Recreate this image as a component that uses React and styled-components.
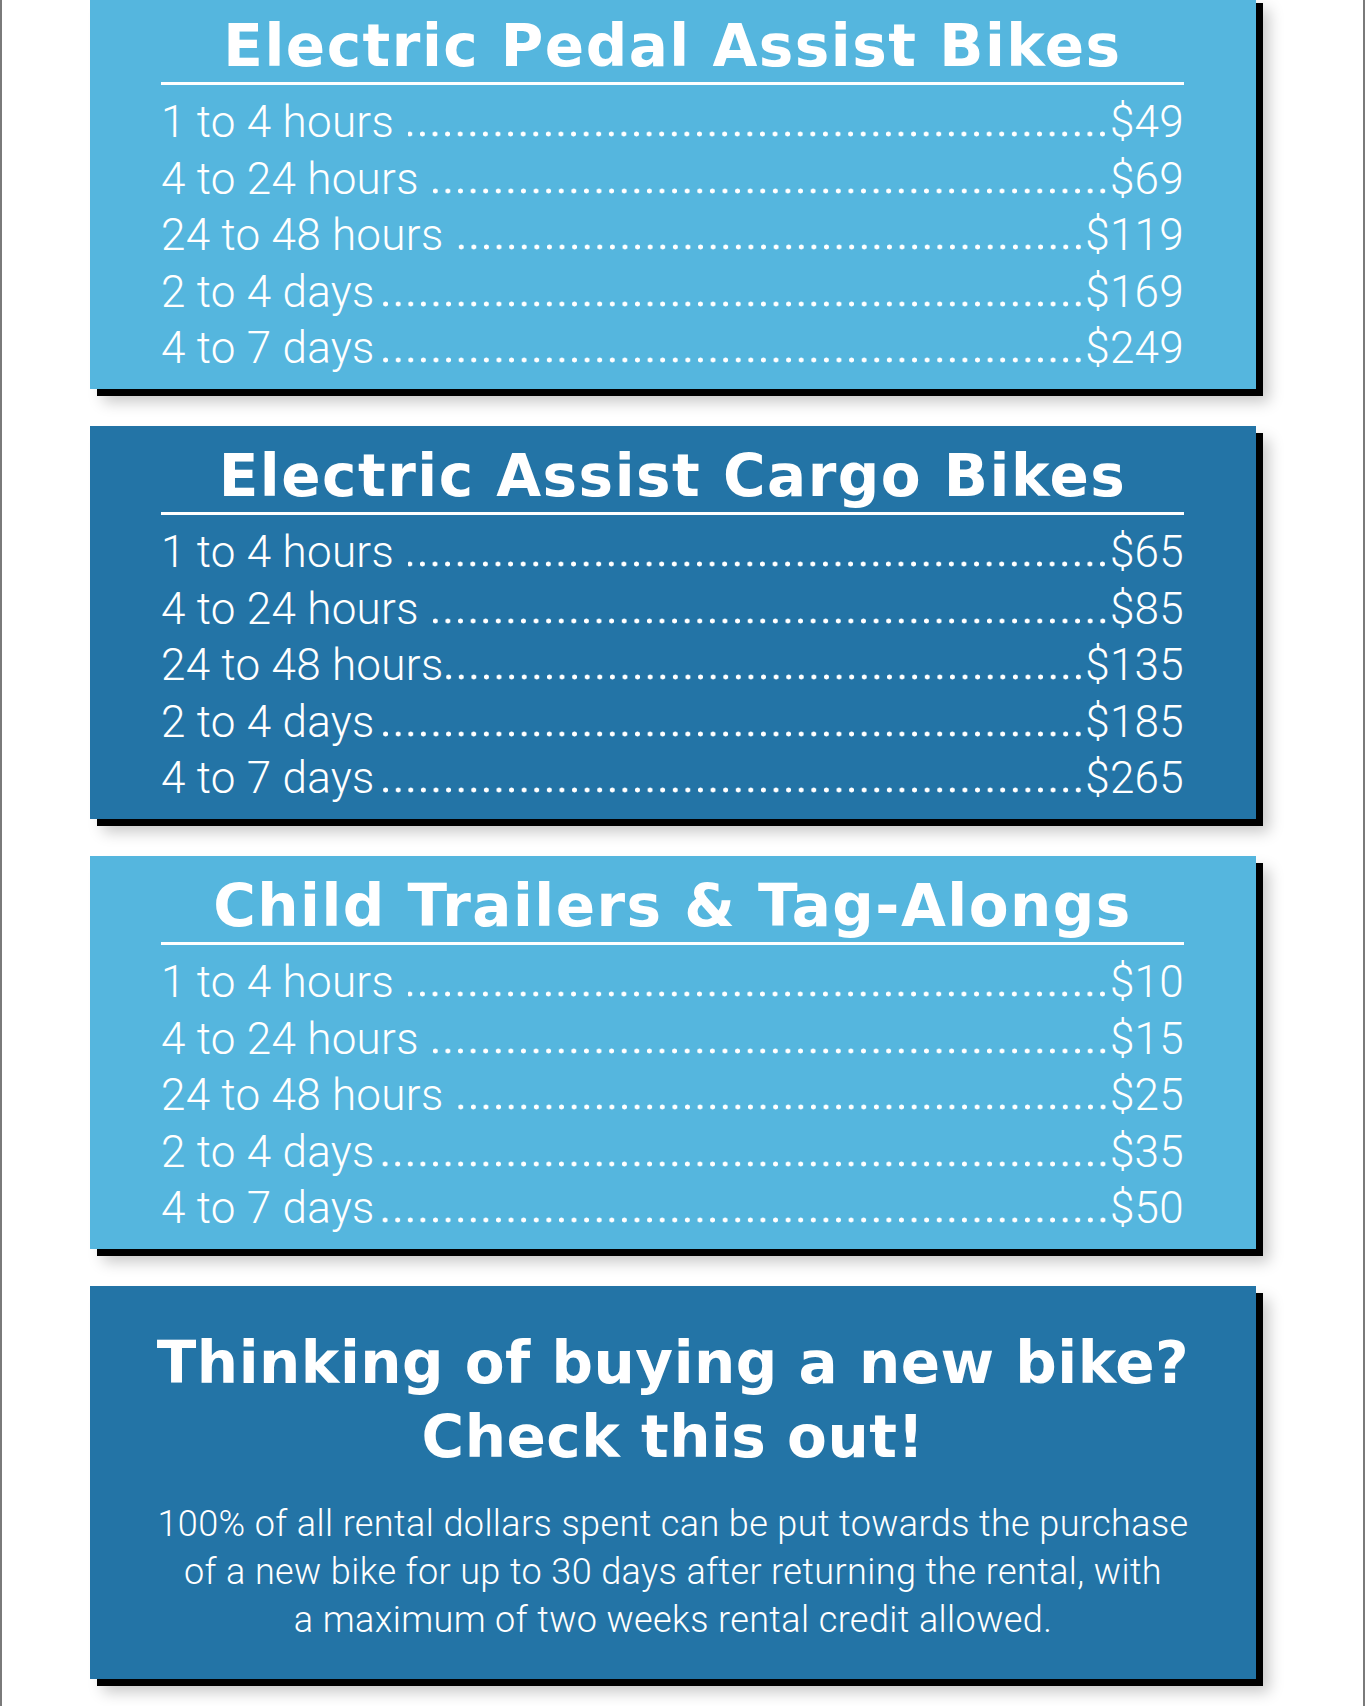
import styled, { createGlobalStyle } from 'styled-components';

const GlobalStyle = createGlobalStyle`
  html, body {
    margin: 0;
    padding: 0;
    background: #ffffff;
  }
  body {
    font-family: 'Roboto', 'Liberation Sans', sans-serif;
  }
`;

const LIGHT = '#55b6de';
const DARK = '#2374a6';

const Page = styled.div`
  width: 1365px;
  min-height: 1706px;
  box-sizing: border-box;
  border-left: 2px solid #7a7a7a;
  border-right: 2px solid #7a7a7a;
  padding: 0 0 0 88px;
  overflow: hidden;
`;

const Stack = styled.div`
  display: flex;
  flex-direction: column;
  gap: 37px;
  margin-top: -4px;
`;

const Card = styled.section`
  width: 1166px;
  height: 393px;
  box-sizing: border-box;
  background: ${(p) => p.$bg};
  padding: 14px 72px 0 71px;
  color: #ffffff;
  box-shadow: 7px 7px 0 #000000, 13px 13px 14px rgba(0, 0, 0, 0.22);
`;

const Title = styled.h2`
  margin: 0;
  height: 72px;
  line-height: 72px;
  text-align: center;
  font-family: 'DejaVu Sans', 'Liberation Sans', sans-serif;
  font-weight: 700;
  font-size: 58px;
  letter-spacing: 1.5px;
  border-bottom: 3px solid #ffffff;
`;

const List = styled.ul`
  list-style: none;
  margin: 9px 0 0;
  padding: 0;
`;

const Row = styled.li`
  display: flex;
  align-items: baseline;
  height: 56.5px;
  line-height: 56.5px;
  font-size: 44px;
  font-weight: 300;
  letter-spacing: 0.3px;
`;

const Label = styled.span`
  white-space: nowrap;
`;

const Leader = styled.span`
  flex: 1;
  height: 6px;
  margin: 0 1px 2px ${(p) => p.$gap}px;
  background-image: radial-gradient(circle, #ffffff 2.2px, transparent 2.8px);
  background-size: 12.6px 6px;
  background-repeat: repeat-x;
  background-position: right bottom;
`;

const Price = styled.span`
  white-space: nowrap;
`;

const PromoCard = styled(Card)`
  padding: 40px 50px 0;
  text-align: center;
`;

const PromoHeading = styled.h2`
  margin: 0;
  font-family: 'DejaVu Sans', 'Liberation Sans', sans-serif;
  font-weight: 700;
  font-size: 58px;
  line-height: 74px;
  letter-spacing: 0.5px;
`;

const PromoText = styled.p`
  margin: 26px 0 0;
  font-size: 36px;
  font-weight: 300;
  line-height: 48px;
  letter-spacing: 0.4px;
`;

const sections = [
  {
    title: 'Electric Pedal Assist Bikes',
    bg: LIGHT,
    rows: [
      ['1 to 4 hours', '$49', 14],
      ['4 to 24 hours', '$69', 14],
      ['24 to 48 hours', '$119', 14],
      ['2 to 4 days', '$169', 6],
      ['4 to 7 days', '$249', 6],
    ],
  },
  {
    title: 'Electric Assist Cargo Bikes',
    bg: DARK,
    rows: [
      ['1 to 4 hours', '$65', 14],
      ['4 to 24 hours', '$85', 14],
      ['24 to 48 hours', '$135', 2],
      ['2 to 4 days', '$185', 2],
      ['4 to 7 days', '$265', 2],
    ],
  },
  {
    title: 'Child Trailers & Tag-Alongs',
    bg: LIGHT,
    rows: [
      ['1 to 4 hours', '$10', 14],
      ['4 to 24 hours', '$15', 14],
      ['24 to 48 hours', '$25', 14],
      ['2 to 4 days', '$35', 6],
      ['4 to 7 days', '$50', 6],
    ],
  },
];

function PriceCard({ title, bg, rows }) {
  return (
    <Card $bg={bg}>
      <Title>{title}</Title>
      <List>
        {rows.map(([label, price, gap]) => (
          <Row key={label}>
            <Label>{label}</Label>
            <Leader $gap={gap} />
            <Price>{price}</Price>
          </Row>
        ))}
      </List>
    </Card>
  );
}

export default function App() {
  return (
    <>
      <GlobalStyle />
      <Page>
        <Stack>
          {sections.map((s) => (
            <PriceCard key={s.title} {...s} />
          ))}
          <PromoCard $bg={DARK}>
            <PromoHeading>
              Thinking of buying a new bike?
              <br />
              Check this out!
            </PromoHeading>
            <PromoText>
              100% of all rental dollars spent can be put towards the purchase
              <br />
              of a new bike for up to 30 days after returning the rental, with
              <br />
              a maximum of two weeks rental credit allowed.
            </PromoText>
          </PromoCard>
        </Stack>
      </Page>
    </>
  );
}
